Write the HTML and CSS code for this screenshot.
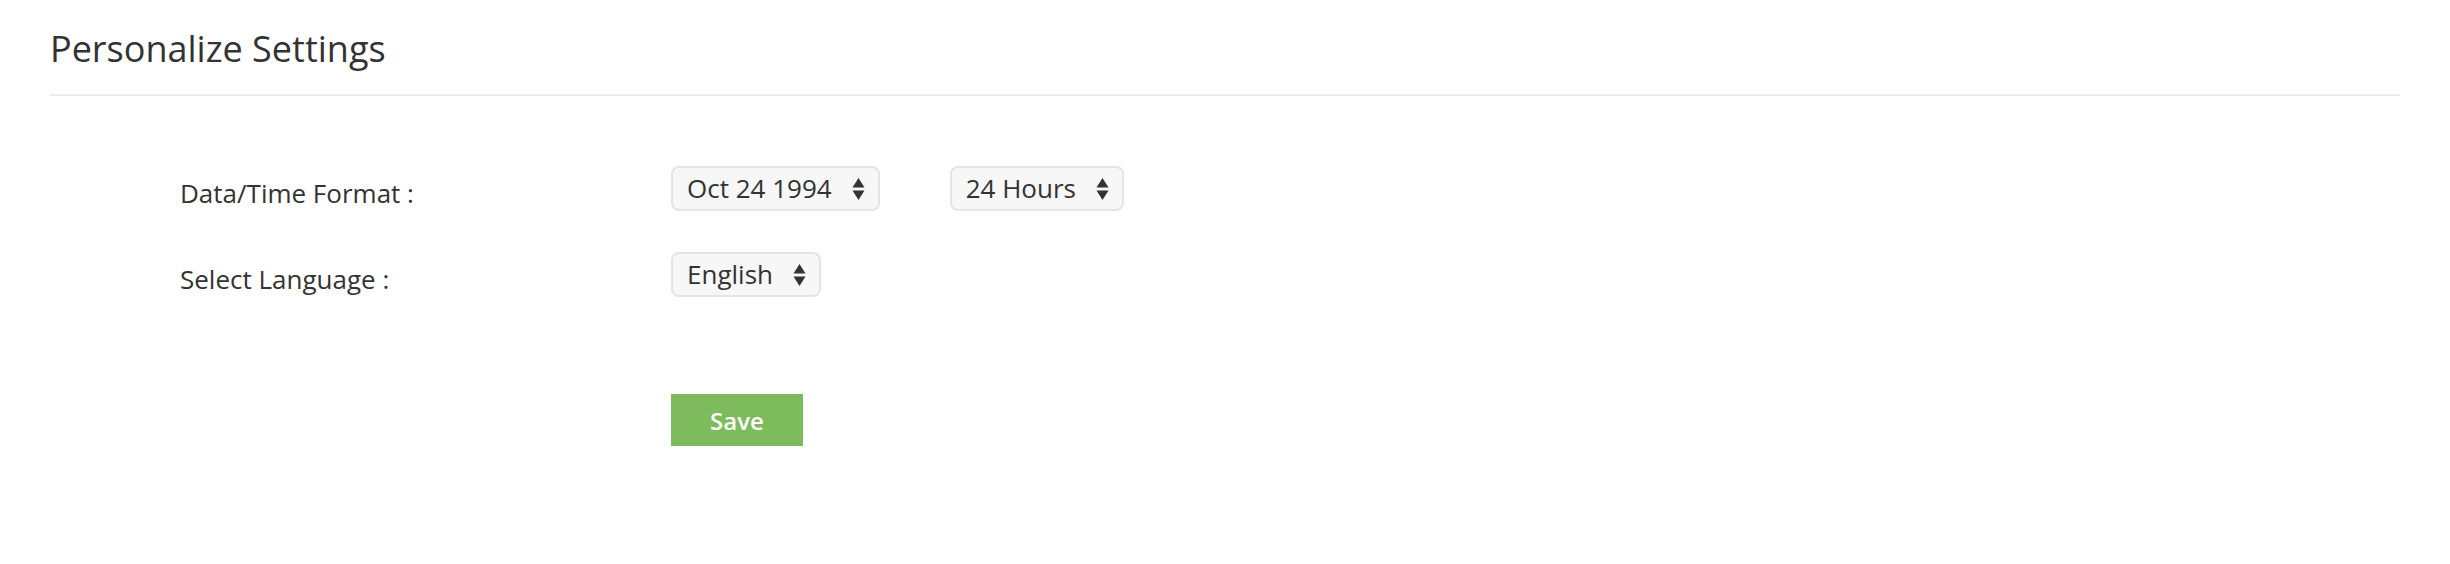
FILE: index.html
```html
<!DOCTYPE html>
<html lang="en">
<head>
    <meta charset="UTF-8">
    <meta name="viewport" content="width=device-width, initial-scale=1.0">
    <title>Personalize Settings</title>
    <link rel="stylesheet" href="styles.css">
</head>
<body>
    <div class="page">
        <h1 class="page-title">Personalize Settings</h1>

        <form class="settings-form">
            <div class="form-row">
                <label class="form-label">Data/Time Format :</label>
                <div class="form-controls">
                    <div class="select-box">
                        <span class="select-value">Oct 24 1994</span>
                        <svg class="select-arrows" width="13" height="22" viewBox="0 0 13 22">
                            <polygon points="6.5,0 12.5,9.5 0.5,9.5" />
                            <polygon points="0.5,12.5 12.5,12.5 6.5,22" />
                        </svg>
                    </div>
                    <div class="select-box">
                        <span class="select-value">24 Hours</span>
                        <svg class="select-arrows" width="13" height="22" viewBox="0 0 13 22">
                            <polygon points="6.5,0 12.5,9.5 0.5,9.5" />
                            <polygon points="0.5,12.5 12.5,12.5 6.5,22" />
                        </svg>
                    </div>
                </div>
            </div>

            <div class="form-row">
                <label class="form-label">Select Language :</label>
                <div class="form-controls">
                    <div class="select-box">
                        <span class="select-value">English</span>
                        <svg class="select-arrows" width="13" height="22" viewBox="0 0 13 22">
                            <polygon points="6.5,0 12.5,9.5 0.5,9.5" />
                            <polygon points="0.5,12.5 12.5,12.5 6.5,22" />
                        </svg>
                    </div>
                </div>
            </div>

            <div class="form-actions">
                <button type="button" class="save-btn">Save</button>
            </div>
        </form>
    </div>
</body>
</html>
```

FILE: styles.css
```css
* {
    margin: 0;
    padding: 0;
    box-sizing: border-box;
}

body {
    font-family: "Open Sans", "Liberation Sans", sans-serif;
    background: #fff;
    color: #333;
}

.page {
    padding: 29px 50px 0;
}

.page-title {
    font-size: 36px;
    font-weight: 400;
    line-height: 40px;
    color: #333;
    padding-bottom: 25px;
    border-bottom: 2px solid #ebebeb;
}

.settings-form {
    margin-top: 70px;
    padding-left: 130px;
}

.form-row {
    display: grid;
    grid-template-columns: 491px auto;
    margin-bottom: 41px;
}

.form-label {
    font-size: 26px;
    line-height: 36px;
    padding-top: 9px;
    color: #333;
}

.form-controls {
    display: flex;
    gap: 70px;
}

.select-box {
    display: flex;
    align-items: center;
    height: 45px;
    padding: 0 13px 0 14px;
    border: 2px solid #e1e5e4;
    border-radius: 8px;
    background: #f7f7f7;
    font-size: 26px;
    line-height: 41px;
    color: #333;
}

.select-arrows {
    margin-left: 20px;
    fill: #333;
}

.form-actions {
    margin-top: 97px;
    padding-left: 491px;
}

.save-btn {
    width: 132px;
    height: 52px;
    border: none;
    background: #7dbb5c;
    color: #fff;
    font-family: "Open Sans", "Liberation Sans", sans-serif;
    font-size: 24px;
    font-weight: 600;
    cursor: pointer;
}
```
